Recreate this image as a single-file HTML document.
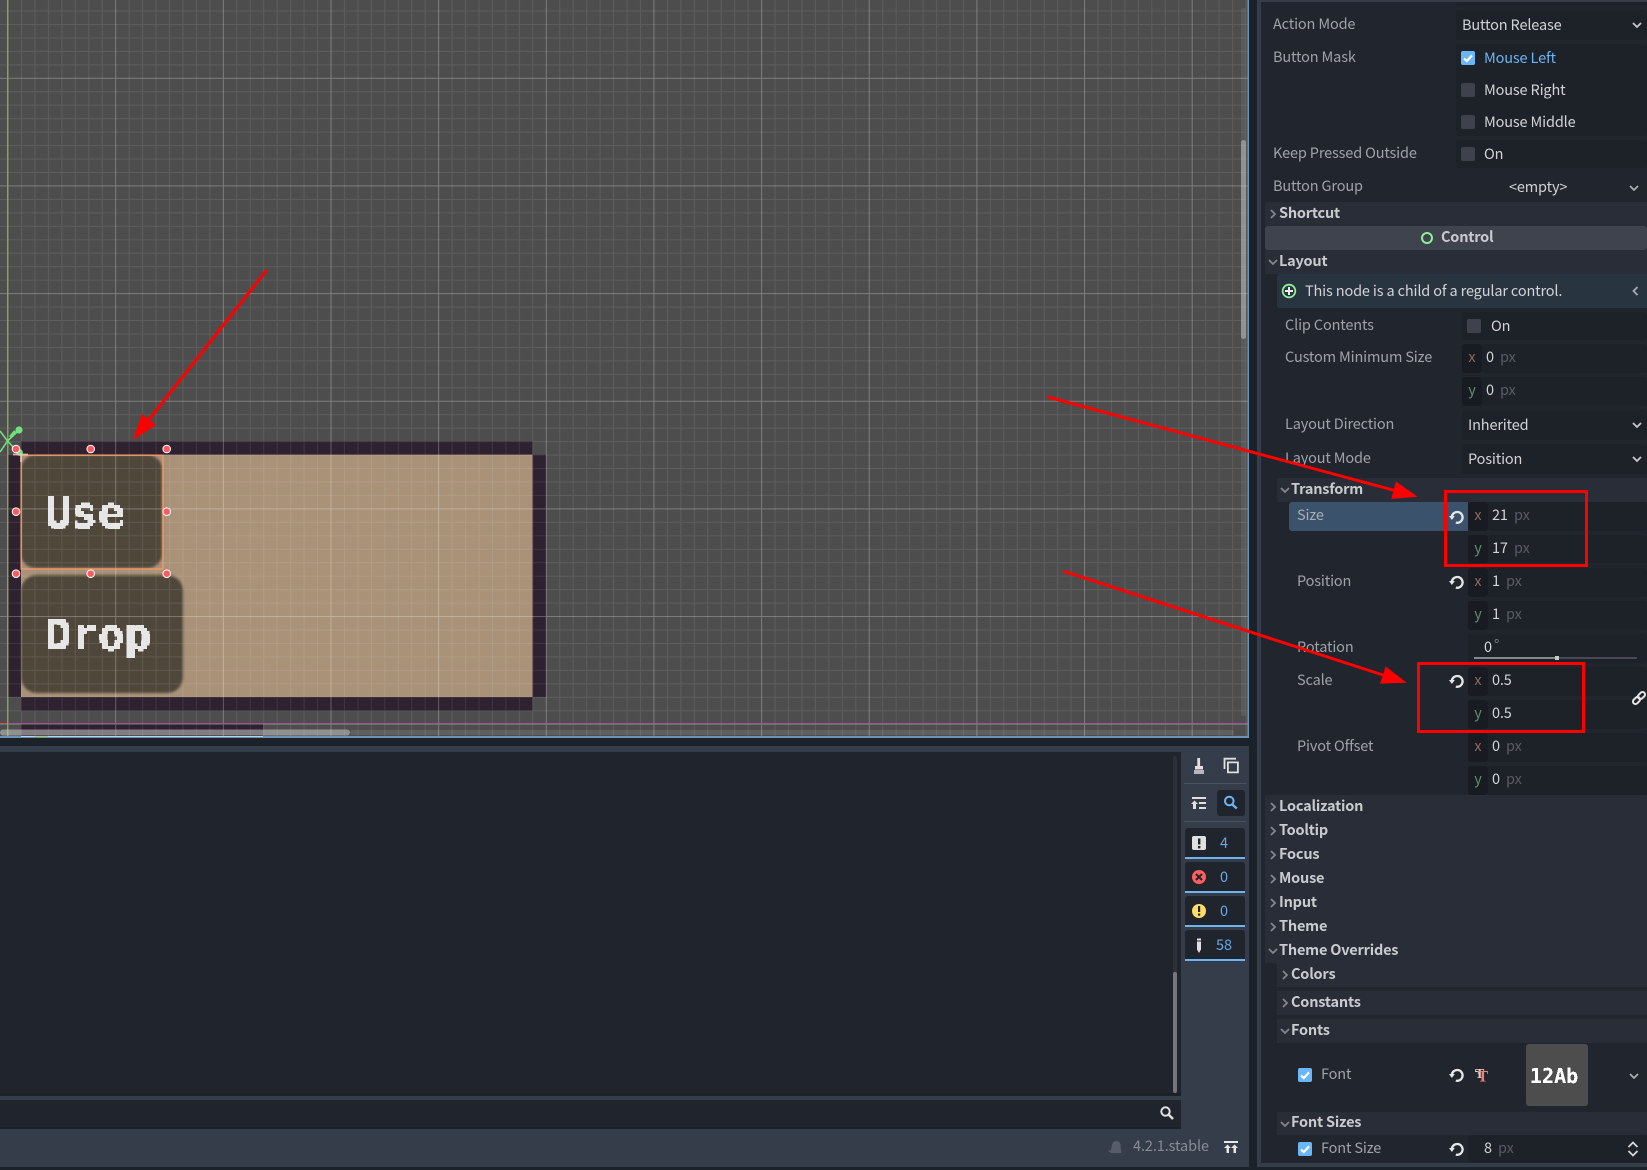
<!DOCTYPE html>
<html><head><meta charset="utf-8"><title>Godot Editor</title>
<style>
html,body{margin:0;padding:0;background:#1c2229}
#r{position:relative;width:1647px;height:1170px;overflow:hidden;background:#1c2229;font-family:"Noto Sans CJK JP","Liberation Sans",sans-serif;font-size:14.5px}
#r i{position:absolute;display:block}
#r span{position:absolute;white-space:nowrap;line-height:20px;height:20px}
.l{color:#9fa2a7;letter-spacing:-.15px}
.v{color:#d2d3d6;letter-spacing:-.15px}
.b{color:#c9cbce;font-weight:700;letter-spacing:-.2px}
.x{color:#8c6a5c;width:20px;text-align:center}
.y{color:#5f8f6a;width:20px;text-align:center}
.p{color:#595c63;letter-spacing:-.1px}
.c{width:14px;height:14px;background:#3f424c;border-radius:2px}
.k{width:14px;height:14px;background:#6bb6f7;border-radius:2px}
#r svg{position:absolute;overflow:visible}
.f{background:#1d2128;border-radius:3px}
.a{background:#181b21;border-radius:3px}
.s{background:#292d37}
</style></head><body>
<div id="r">

<svg width="0" height="0" style="left:0;top:0">
<defs>
<symbol id="cd" viewBox="0 0 12 12"><path d="M2 4l4 4 4-4" fill="none" stroke="currentColor" stroke-width="1.8"/></symbol>
<symbol id="cr" viewBox="0 0 12 12"><path d="M4 2l4 4-4 4" fill="none" stroke="currentColor" stroke-width="1.8"/></symbol>
<symbol id="rs" viewBox="0 0 16 16"><path d="M6.800 13.600A5.400 5.400 0 1 0 2.800 8" fill="none" stroke="#e6e6e6" stroke-width="2.300"/><path d="M0 7h5.800L2.900 11z" fill="#e6e6e6"/></symbol>
<symbol id="ck" viewBox="0 0 14 14"><path d="M3 7.500l2.800 2.600L11 4.400" fill="none" stroke="#fff" stroke-width="2.200"/></symbol>
<pattern id="gr" patternUnits="userSpaceOnUse" x="7.550" y="-29.850" width="107.650" height="107.650">
<path d="M13.960 0V107.650M27.410 0V107.650M40.870 0V107.650M54.320 0V107.650M67.780 0V107.650M81.240 0V107.650M94.690 0V107.650M0 13.960H107.650M0 27.410H107.650M0 40.870H107.650M0 54.320H107.650M0 67.780H107.650M0 81.240H107.650M0 94.690H107.650" stroke="#fff" stroke-opacity=".09" stroke-width="1" fill="none"/>
<path d="M0.500 0V107.650M0 0.500H107.650" stroke="#fff" stroke-opacity=".27" stroke-width="1" fill="none"/>
</pattern>
<filter id="px" filterUnits="userSpaceOnUse" x="0" y="400" width="300" height="300" color-interpolation-filters="sRGB">
<feFlood x="1" y="401" width="1" height="1" flood-color="#000"/>
<feComposite width="3" height="3"/>
<feTile result="t"/>
<feComposite in="SourceGraphic" in2="t" operator="in"/>
<feComponentTransfer><feFuncA type="discrete" tableValues="0 1 1"/></feComponentTransfer>
<feMorphology operator="dilate" radius="1"/>
</filter>
<filter id="th" color-interpolation-filters="sRGB">
<feComponentTransfer><feFuncA type="discrete" tableValues="0 1 1"/></feComponentTransfer>
</filter>
</defs>
</svg>

<!-- viewport -->
<svg width="1249" height="738" style="left:0;top:0">
<rect width="1249" height="738" fill="#4d4d4d"/>
<g fill="#2e2130">
<rect x="21" y="441.300" width="511.500" height="13.400"/>
<rect x="21" y="697" width="511.500" height="13.700"/>
<rect x="7.500" y="454.700" width="13.500" height="242.300"/>
<rect x="532.500" y="454.700" width="13.500" height="242.300"/>
<rect x="21" y="723.500" width="242" height="13"/>
</g>
<rect x="21" y="454.700" width="511.500" height="242.300" fill="#a99278"/>
<rect x="21" y="455" width="141" height="113" rx="14" fill="#50473b" style="filter:blur(1.200px)"/>
<rect x="21" y="575" width="162" height="118" rx="16" fill="#50473b" style="filter:blur(1.200px)"/>
<g fill="#e6e6e6" font-family="'DejaVu Sans Mono','Liberation Mono',monospace" font-weight="700" font-size="44" filter="url(#px)">
<text x="45" y="528">Use</text>
<text x="45" y="650">Drop</text>
</g>
<rect width="1249" height="738" fill="url(#gr)"/>
<rect x="7" width="1.300" height="736" fill="#80ad38"/>
<rect x="0" y="723" width="7" height="1" fill="#c8524f"/>
<rect x="8" y="723" width="1241" height="1" fill="#a5509f"/>
<rect x="350" y="730" width="884" height="5" fill="#fff" fill-opacity=".1" rx="2"/>
<rect x="0" y="729.500" width="350" height="6" rx="3" fill="#c8c8c8" fill-opacity=".55"/>
<rect x="1241" y="8" width="5" height="708" rx="2" fill="#fff" fill-opacity=".08"/>
<rect x="1241" y="140" width="5" height="199" rx="2.500" fill="#c8c8c8" fill-opacity=".5"/>
<rect x="0" y="736" width="1249" height="2" fill="#6c93b5"/>
<rect x="21" y="736" width="242" height="1" fill="#b9d3e6"/>
<rect x="35" y="736" width="13" height="1" fill="#a8cf5c"/>
<rect x="1247.500" y="0" width="1.500" height="738" fill="#6c93b5"/>
<!-- selection -->
<rect x="21.200" y="455.200" width="141.800" height="113.800" fill="none" stroke="#f2986a" stroke-width="1.400"/>
<!-- gizmo -->
<g stroke="#72e07e" stroke-width="1.600" fill="none"><path d="M0 431L7.500 441L0 452M7.500 441L17 432M7.500 441L18 452"/></g>
<circle cx="19" cy="430" r="3.600" fill="#72e07e"/>
<path d="M10 437l5-6" stroke="#72e07e" stroke-width="2.500"/>
<circle cx="19.500" cy="452.500" r="3.400" fill="#72e07e"/>
<path d="M13 454.500h15M21 455v7" stroke="#f6c5c2" stroke-width="1.800" stroke-opacity=".85"/>
<!-- handles -->
<g fill="#ff5a5f" stroke="#fff" stroke-width="1">
<circle cx="16" cy="449" r="3.800"/><circle cx="90.700" cy="449" r="3.800"/><circle cx="166.700" cy="449" r="3.800"/>
<circle cx="16" cy="511.700" r="3.800"/><circle cx="166.700" cy="511.700" r="3.800"/>
<circle cx="16" cy="573.700" r="3.800"/><circle cx="90.700" cy="573.700" r="3.800"/><circle cx="166.700" cy="573.700" r="3.800"/>
</g>
</svg>

<!-- bottom panel -->
<i style="left:0;top:746px;width:1249px;height:421px;background:#363d4a"></i>
<i style="left:0;top:752px;width:1181px;height:341px;background:#20242d"></i>
<i style="left:0;top:1093px;width:1181px;height:3px;background:#1c2027"></i>
<i style="left:1173px;top:756px;width:4px;height:337px;background:#2c303a;border-radius:2px"></i>
<i style="left:1173px;top:972px;width:4px;height:121px;background:#74777d;border-radius:2px"></i>
<i style="left:0;top:1100px;width:1181px;height:27px;background:#20242d"></i>
<i style="left:0;top:1127px;width:1181px;height:2px;background:#1c2027"></i>
<i style="left:1184px;top:783px;width:62px;height:1px;background:#4b515d"></i>
<i style="left:1184px;top:821px;width:62px;height:1px;background:#4b515d"></i>
<i style="left:1217px;top:790px;width:28px;height:26px;background:#20242d;border-radius:3px"></i>
<svg width="70" height="90" style="left:1184px;top:752px" fill="#e0e0e0">
<!-- broom -->
<path d="M13.300 6h2.800v8h-2.800z"/><path d="M11 14h8v3.500h-8z"/><path d="M10 18h10v4h-10z" opacity=".75"/>
<!-- copy -->
<path d="M40.500 17V6.700H52" fill="none" stroke="#e0e0e0" stroke-width="1.800"/><path d="M43.900 10.400h10v10h-10z" fill="none" stroke="#e0e0e0" stroke-width="1.800"/>
<!-- collapse -->
<path d="M8 45h14v2H8zM15 50h7v2h-7zM15 55h7v2h-7z"/><path d="M10.500 48.500L14 52h-2v5H9v-5H7z"/>
<!-- search -->
<circle cx="45.300" cy="49" r="4.300" fill="none" stroke="#6cb4f2" stroke-width="2"/><path d="M48.300 52.500l4.500 4" stroke="#6cb4f2" stroke-width="2.400"/>
</svg>

<i style="left:1185px;top:828px;width:60px;height:29px;background:#20242d;border-radius:3px 3px 0 0;border-bottom:2px solid #6cb4f2"></i>
<i style="left:1185px;top:862px;width:60px;height:29px;background:#20242d;border-radius:3px 3px 0 0;border-bottom:2px solid #6cb4f2"></i>
<i style="left:1185px;top:896px;width:60px;height:29px;background:#20242d;border-radius:3px 3px 0 0;border-bottom:2px solid #6cb4f2"></i>
<i style="left:1185px;top:930px;width:60px;height:29px;background:#20242d;border-radius:3px 3px 0 0;border-bottom:2px solid #6cb4f2"></i>
<svg width="20" height="140" style="left:1192px;top:836px">
<rect x="0" y="0" width="14" height="14" rx="2" fill="#e0e0e0"/><rect x="6" y="2.500" width="2.400" height="6" fill="#20242d"/><rect x="6" y="10" width="2.400" height="2.400" fill="#20242d"/>
<circle cx="7" cy="41" r="7" fill="#ff5f5f"/><path d="M4 38l6 6M10 38l-6 6" stroke="#20242d" stroke-width="2"/>
<circle cx="7" cy="75" r="7" fill="#ffdd65"/><rect x="6" y="70" width="2.200" height="6" fill="#20242d"/><rect x="6" y="77.500" width="2.200" height="2.200" fill="#20242d"/>
<path d="M5 102.500h4v2H5zM5 105.500h4v8l-2 3.500-2-3.500z" fill="#e0e0e0"/>
</svg>
<span style="left:1214px;top:833px;width:20px;text-align:center;color:#66a9e6">4</span>
<span style="left:1214px;top:867px;width:20px;text-align:center;color:#66a9e6">0</span>
<span style="left:1214px;top:901px;width:20px;text-align:center;color:#66a9e6">0</span>
<span style="left:1214px;top:935px;width:20px;text-align:center;color:#66a9e6">58</span>

<svg width="16" height="16" style="left:1159px;top:1105px"><circle cx="6.500" cy="6.500" r="4.200" fill="none" stroke="#e0e0e0" stroke-width="2"/><path d="M9.500 9.500l4.500 4.500" stroke="#e0e0e0" stroke-width="2.400"/></svg>
<svg width="16" height="16" style="left:1107px;top:1140px"><path d="M1 11l3-1 1-5c.5-3 3-4.500 5-4s4 2 3.500 5l1 7H4z" fill="#565c68"/></svg>
<span style="left:1133px;top:1136px;color:#888b92;letter-spacing:-.1px">4.2.1.stable</span>
<svg width="16" height="14" style="left:1223px;top:1141px" fill="#e6e6e6"><rect x="1" y="0" width="14" height="2"/><path d="M4.500 3.500L8 7H6v5H3.500V7H1zM11.500 3.500L15 7h-2v5h-2.500V7H8z"/></svg>

<!-- inspector frame -->
<i style="left:1257px;top:0;width:390px;height:1167px;background:#363d4a"></i>
<i style="left:1261px;top:2px;width:386px;height:1161px;background:#21252d"></i>
<i class="f" style="left:1456px;top:2px;width:191px;height:4px"></i>

<i class="f" style="left:1456px;top:10px;width:191px;height:30px"></i>
<i class="f" style="left:1456px;top:44px;width:191px;height:92px"></i>
<i class="f" style="left:1456px;top:140px;width:191px;height:28px"></i>

<span class="l" style="left:1273px;top:14px">Action Mode</span>
<span class="v" style="left:1462px;top:15px">Button Release</span>
<svg width="12" height="12" style="left:1631px;top:19px;color:#c8cacd"><use href="#cd"/></svg>

<span class="l" style="left:1273px;top:47px">Button Mask</span>
<i class="k" style="left:1461px;top:51px"></i><svg width="14" height="14" style="left:1461px;top:51px"><use href="#ck"/></svg>
<span style="left:1484px;top:48px;color:#6cb4f2;letter-spacing:-.15px">Mouse Left</span>
<i class="c" style="left:1461px;top:83px"></i>
<span class="v" style="left:1484px;top:80px">Mouse Right</span>
<i class="c" style="left:1461px;top:115px"></i>
<span class="v" style="left:1484px;top:112px">Mouse Middle</span>
<span class="l" style="left:1273px;top:143px">Keep Pressed Outside</span>
<i class="c" style="left:1461px;top:147px"></i>
<span class="v" style="left:1484px;top:144px">On</span>
<span class="l" style="left:1273px;top:176px">Button Group</span>
<span class="v" style="left:1509px;top:177px">&lt;empty&gt;</span>
<svg width="12" height="12" style="left:1628px;top:182px;color:#a8aaae"><use href="#cd"/></svg>

<i class="s" style="left:1265px;top:202px;width:382px;height:24px"></i>
<span class="b" style="left:1279px;top:203px">Shortcut</span>
<svg width="12" height="12" style="left:1267px;top:208px;color:#83868c"><use href="#cr"/></svg>
<i style="left:1265px;top:226px;width:382px;height:24px;background:#3e434e;border-radius:3px"></i>
<svg width="14" height="14" style="left:1420px;top:231px"><circle cx="7" cy="7" r="5" fill="none" stroke="#8eef97" stroke-width="2"/></svg>
<span class="b" style="left:1441px;top:227px">Control</span>
<i class="s" style="left:1265px;top:250px;width:382px;height:24px"></i>
<span class="b" style="left:1279px;top:251px">Layout</span>
<svg width="12" height="12" style="left:1267px;top:256px;color:#83868c"><use href="#cd"/></svg>

<i style="left:1277px;top:274px;width:370px;height:34px;background:#293441;border-radius:3px 0 0 3px"></i>
<svg width="16" height="16" style="left:1281px;top:283px"><circle cx="8" cy="8" r="6.300" fill="none" stroke="#8eef97" stroke-width="1.800"/><path d="M4 8h8M8 4v8" stroke="#eee" stroke-width="2"/></svg>
<span class="v" style="left:1305px;top:281px">This node is a child of a regular control.</span>
<svg width="12" height="12" style="left:1630px;top:285px;color:#a8aaae"><path d="M7.500 2L3.500 6l4 4" fill="none" stroke="currentColor" stroke-width="1.800"/></svg>

<i class="f" style="left:1462px;top:312px;width:185px;height:28px"></i>
<span class="l" style="left:1285px;top:315px">Clip Contents</span>
<i class="c" style="left:1467px;top:319px"></i>
<span class="v" style="left:1491px;top:316px">On</span>

<span class="l" style="left:1285px;top:347px">Custom Minimum Size</span>
<i class="f" style="left:1482px;top:344px;width:165px;height:29px"></i><i class="a" style="left:1462px;top:344px;width:20px;height:29px"></i>
<span class="x" style="left:1462px;top:347px">x</span><span class="v" style="left:1486px;top:347px">0</span><span class="p" style="left:1500px;top:347px">px</span>
<i class="f" style="left:1482px;top:377px;width:165px;height:29px"></i><i class="a" style="left:1462px;top:377px;width:20px;height:29px"></i>
<span class="y" style="left:1462px;top:380px">y</span><span class="v" style="left:1486px;top:380px">0</span><span class="p" style="left:1500px;top:380px">px</span>

<i class="f" style="left:1462px;top:410px;width:185px;height:30px"></i>
<span class="l" style="left:1285px;top:414px">Layout Direction</span>
<span class="v" style="left:1468px;top:415px">Inherited</span>
<svg width="12" height="12" style="left:1631px;top:419px;color:#c8cacd"><use href="#cd"/></svg>
<i class="f" style="left:1462px;top:444px;width:185px;height:30px"></i>
<span class="l" style="left:1285px;top:448px">Layout Mode</span>
<span class="v" style="left:1468px;top:449px">Position</span>
<svg width="12" height="12" style="left:1631px;top:453px;color:#c8cacd"><use href="#cd"/></svg>

<i class="s" style="left:1277px;top:478px;width:370px;height:24px"></i>
<span class="b" style="left:1291px;top:479px">Transform</span>
<svg width="12" height="12" style="left:1279px;top:484px;color:#83868c"><use href="#cd"/></svg>

<i style="left:1289px;top:502px;width:179px;height:29px;background:#3a526b;border-radius:3px 0 0 3px"></i>
<span class="l" style="left:1297px;top:505px;color:#a8adb3">Size</span>
<svg width="16" height="16" style="left:1449px;top:509px"><use href="#rs"/></svg>
<i class="f" style="left:1488px;top:502px;width:159px;height:29px"></i><i class="a" style="left:1468px;top:502px;width:20px;height:29px"></i>
<span class="x" style="left:1468px;top:505px">x</span><span class="v" style="left:1492px;top:505px">21</span><span class="p" style="left:1514px;top:505px">px</span>
<i class="f" style="left:1488px;top:535px;width:159px;height:28px"></i><i class="a" style="left:1468px;top:535px;width:20px;height:28px"></i>
<span class="y" style="left:1468px;top:538px">y</span><span class="v" style="left:1492px;top:538px">17</span><span class="p" style="left:1514px;top:538px">px</span>

<span class="l" style="left:1297px;top:571px">Position</span>
<svg width="16" height="16" style="left:1449px;top:574px"><use href="#rs"/></svg>
<i class="f" style="left:1488px;top:568px;width:159px;height:29px"></i><i class="a" style="left:1468px;top:568px;width:20px;height:29px"></i>
<span class="x" style="left:1468px;top:571px">x</span><span class="v" style="left:1492px;top:571px">1</span><span class="p" style="left:1506px;top:571px">px</span>
<i class="f" style="left:1488px;top:601px;width:159px;height:29px"></i><i class="a" style="left:1468px;top:601px;width:20px;height:29px"></i>
<span class="y" style="left:1468px;top:604px">y</span><span class="v" style="left:1492px;top:604px">1</span><span class="p" style="left:1506px;top:604px">px</span>

<span class="l" style="left:1297px;top:637px">Rotation</span>
<i class="f" style="left:1468px;top:634px;width:179px;height:29px"></i>
<span class="v" style="left:1484px;top:637px">0</span><span class="p" style="left:1494px;top:635px;color:#7d8086">°</span>
<i style="left:1474px;top:657px;width:163px;height:2px;background:#474a52"></i>
<i style="left:1474px;top:657px;width:83px;height:2px;background:#85878b"></i>
<i style="left:1555px;top:656px;width:4px;height:4px;background:#c8c8c8"></i>

<span class="l" style="left:1297px;top:670px">Scale</span>
<svg width="16" height="16" style="left:1449px;top:673px"><use href="#rs"/></svg>
<i class="f" style="left:1488px;top:667px;width:159px;height:29px"></i><i class="a" style="left:1468px;top:667px;width:20px;height:29px"></i>
<span class="x" style="left:1468px;top:670px">x</span><span class="v" style="left:1492px;top:670px">0.5</span>
<i class="f" style="left:1488px;top:700px;width:159px;height:29px"></i><i class="a" style="left:1468px;top:700px;width:20px;height:29px"></i>
<span class="y" style="left:1468px;top:703px">y</span><span class="v" style="left:1492px;top:703px">0.5</span>
<svg width="16" height="16" style="left:1631px;top:690px"><g transform="rotate(-45 8 8)" fill="none" stroke="#e6e6e6" stroke-width="2"><rect x="0.500" y="5.500" width="8" height="5" rx="2.500"/><rect x="7.500" y="5.500" width="8" height="5" rx="2.500"/></g></svg>

<span class="l" style="left:1297px;top:736px">Pivot Offset</span>
<i class="f" style="left:1488px;top:733px;width:159px;height:29px"></i><i class="a" style="left:1468px;top:733px;width:20px;height:29px"></i>
<span class="x" style="left:1468px;top:736px">x</span><span class="v" style="left:1492px;top:736px">0</span><span class="p" style="left:1506px;top:736px">px</span>
<i class="f" style="left:1488px;top:766px;width:159px;height:29px"></i><i class="a" style="left:1468px;top:766px;width:20px;height:29px"></i>
<span class="y" style="left:1468px;top:769px">y</span><span class="v" style="left:1492px;top:769px">0</span><span class="p" style="left:1506px;top:769px">px</span>

<i class="s" style="left:1265px;top:795px;width:382px;height:168px"></i>
<span class="b" style="left:1279px;top:796px">Localization</span><svg width="12" height="12" style="left:1267px;top:801px;color:#83868c"><use href="#cr"/></svg>
<span class="b" style="left:1279px;top:820px">Tooltip</span><svg width="12" height="12" style="left:1267px;top:825px;color:#83868c"><use href="#cr"/></svg>
<span class="b" style="left:1279px;top:844px">Focus</span><svg width="12" height="12" style="left:1267px;top:849px;color:#83868c"><use href="#cr"/></svg>
<span class="b" style="left:1279px;top:868px">Mouse</span><svg width="12" height="12" style="left:1267px;top:873px;color:#83868c"><use href="#cr"/></svg>
<span class="b" style="left:1279px;top:892px">Input</span><svg width="12" height="12" style="left:1267px;top:897px;color:#83868c"><use href="#cr"/></svg>
<span class="b" style="left:1279px;top:916px">Theme</span><svg width="12" height="12" style="left:1267px;top:921px;color:#83868c"><use href="#cr"/></svg>
<span class="b" style="left:1279px;top:940px">Theme Overrides</span><svg width="12" height="12" style="left:1267px;top:945px;color:#83868c"><use href="#cd"/></svg>

<i class="s" style="left:1277px;top:963px;width:370px;height:24px"></i>
<span class="b" style="left:1291px;top:964px">Colors</span><svg width="12" height="12" style="left:1279px;top:969px;color:#83868c"><use href="#cr"/></svg>
<i class="s" style="left:1277px;top:991px;width:370px;height:24px"></i>
<span class="b" style="left:1291px;top:992px">Constants</span><svg width="12" height="12" style="left:1279px;top:997px;color:#83868c"><use href="#cr"/></svg>
<i class="s" style="left:1277px;top:1019px;width:370px;height:24px"></i>
<span class="b" style="left:1291px;top:1020px">Fonts</span><svg width="12" height="12" style="left:1279px;top:1025px;color:#83868c"><use href="#cd"/></svg>

<i class="k" style="left:1298px;top:1068px"></i><svg width="14" height="14" style="left:1298px;top:1068px"><use href="#ck"/></svg>
<span class="l" style="left:1321px;top:1064px">Font</span>
<svg width="16" height="16" style="left:1449px;top:1067px"><use href="#rs"/></svg>
<svg width="18" height="18" style="left:1475px;top:1066px" font-family="'Liberation Serif',serif" font-weight="700">
<text x="0" y="12" font-size="14" fill="#cfd0d2">T</text>
<rect x="0" y="5" width="12" height="1" fill="#cfd0d2"/>
<text x="2.500" y="15.500" font-size="16" fill="#ff7a70">T</text>
</svg>
<i style="left:1526px;top:1044px;width:62px;height:62px;background:#4d4d4d;border-radius:3px"></i>
<svg width="62" height="62" style="left:1526px;top:1044px">
<text x="4" y="39" fill="#fff" font-family="'DejaVu Sans Mono','Liberation Mono',monospace" font-weight="700" font-size="20" filter="url(#th)">12Ab</text>
</svg>
<svg width="12" height="12" style="left:1628px;top:1070px;color:#a8aaae"><use href="#cd"/></svg>

<i class="s" style="left:1277px;top:1112px;width:370px;height:23px"></i>
<span class="b" style="left:1291px;top:1112px">Font Sizes</span><svg width="12" height="12" style="left:1279px;top:1118px;color:#83868c"><use href="#cd"/></svg>
<i class="f" style="left:1468px;top:1135px;width:179px;height:28px"></i>
<i class="k" style="left:1298px;top:1142px"></i><svg width="14" height="14" style="left:1298px;top:1142px"><use href="#ck"/></svg>
<span class="l" style="left:1321px;top:1138px">Font Size</span>
<svg width="16" height="16" style="left:1449px;top:1141px"><use href="#rs"/></svg>
<span class="v" style="left:1484px;top:1138px">8</span><span class="p" style="left:1498px;top:1138px">px</span>
<svg width="12" height="16" style="left:1627px;top:1141px"><path d="M1.500 6L6 1.500 10.500 6M1.500 10L6 14.500 10.500 10" fill="none" stroke="#d6d7d9" stroke-width="1.800"/></svg>

<!-- annotations -->
<svg width="1647" height="1170" style="left:0;top:0;pointer-events:none">
<g stroke="#f00" stroke-width="3" fill="none">
<path d="M266.800 270L149 419.600"/>
<path d="M1048 397L1393.600 490.200"/>
<path d="M1063 571L1382.900 675"/>
<rect x="1445.500" y="491.500" width="141" height="74"/>
<rect x="1418.500" y="663.500" width="165" height="68"/>
</g>
<g fill="#f00">
<path d="M133 440L156 425L142 414z"/>
<path d="M1417.700 496.700L1391.300 498.900L1395.900 481.500z"/>
<path d="M1406.700 682.700L1380 683.600L1385.700 666.400z"/>
</g>
</svg>
</div>
</body></html>
